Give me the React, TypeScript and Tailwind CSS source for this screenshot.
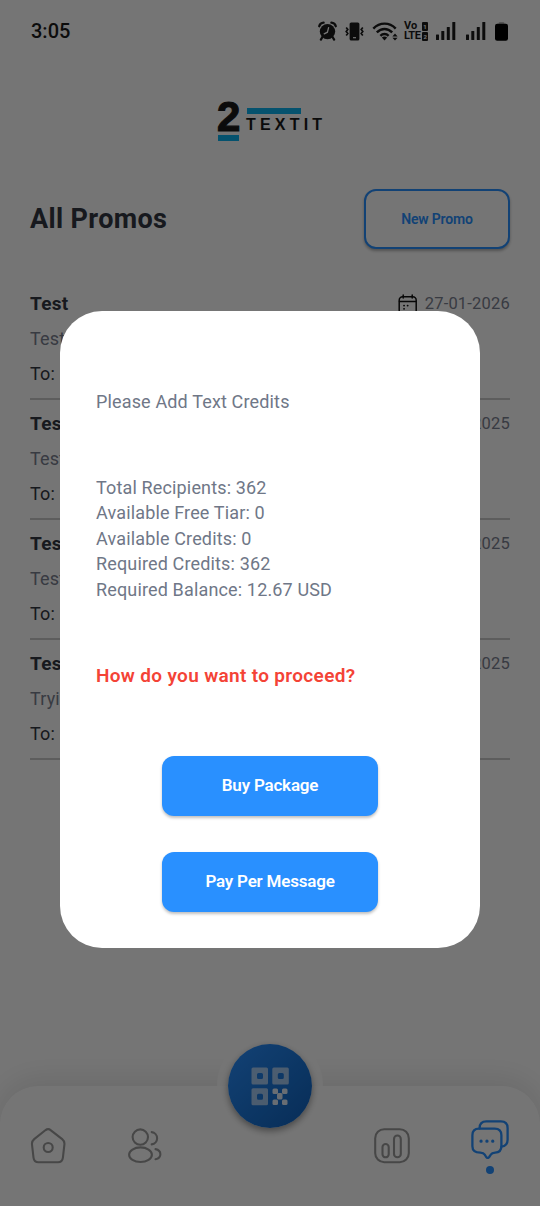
import type { ReactNode } from "react";

const promos = [
  { title: "Test", body: "Test", date: "27-01-2026" },
  { title: "Test", body: "Test", date: "18-12-2025" },
  { title: "Test", body: "Test", date: "18-12-2025" },
  { title: "Test", body: "Trying", date: "18-12-2025" },
];

const summary = [
  "Total Recipients: 362",
  "Available Free Tiar: 0",
  "Available Credits: 0",
  "Required Credits: 362",
  "Required Balance: 12.67 USD",
];

const qrCell =
  "M2 .5h13.500q1.500 0 1.500 1.500v14q0 1.500-1.500 1.500H2Q.5 17.500.5 16V2Q.5.5 2 .5zM6 7.500v3q0 1.500 1.500 1.500h3q1.500 0 1.500-1.500v-3Q12 6 10.500 6h-3Q6 6 6 7.500z";

function Signal() {
  return (
    <svg width="20" height="18" viewBox="0 0 20 18" fill="currentColor">
      <rect x="0" y="12.5" width="3" height="5.5" rx=".5" />
      <rect x="5.3" y="9" width="3" height="9" rx=".5" />
      <rect x="10.8" y="5" width="3" height="13" rx=".5" />
      <rect x="16.3" y="0" width="3" height="18" rx=".5" />
    </svg>
  );
}

function StatusBar() {
  return (
    <div className="flex h-[62px] items-center justify-between pr-8 pl-[31px] text-[#1c1c1c]">
      <span className="text-[20px] font-medium">3:05</span>
      <div className="flex items-center">
        <svg width="19" height="20" viewBox="0 0 19 20" fill="none">
          <path d="M1.2 5.2A5 5 0 0 1 5.6 1.6M17.8 5.2a5 5 0 0 0-4.4-3.6" stroke="currentColor" strokeWidth="2.3" strokeLinecap="round" />
          <circle cx="9.5" cy="10.6" r="7.7" fill="currentColor" />
          <path d="m4.4 16-1.5 2.6M14.6 16l1.5 2.6" stroke="currentColor" strokeWidth="2.2" strokeLinecap="round" />
          <path d="M10.6 6.6 9.4 11.2l-3.2 1.6" stroke="#fff" strokeWidth="1.3" strokeLinecap="round" />
        </svg>
        <svg className="ml-[8px]" width="19" height="19" viewBox="0 0 19 19" fill="none">
          <rect x="4.6" y=".5" width="9.8" height="18" rx="1.6" fill="currentColor" />
          <path d="M8 15.7h3" stroke="#fff" strokeWidth="1.2" />
          <path d="m1.2 5.5 1.6 2-1.6 2 1.6 2-1.6 2M17.8 5.5l-1.6 2 1.6 2-1.6 2 1.6 2" stroke="currentColor" strokeWidth="1.7" />
        </svg>
        <svg className="ml-[8px]" width="26" height="19" viewBox="0 0 26 19" fill="none">
          <path d="M1.300 6.600c6.400-6.700 16.200-6.700 22.400 0M4.800 10.400c4.600-4.600 10.800-4.600 15.400 0M8.400 13.800c2.400-2.400 5.800-2.400 8.200 0" stroke="currentColor" strokeWidth="2.4" />
          <path d="m12.5 18.6-2.7-3c1.600-1.400 3.800-1.400 5.400 0z" fill="currentColor" />
          <path d="m23 11.6 2.6 2.800h-5.200zM23 18.600l-2.600-2.800h5.200z" fill="currentColor" />
        </svg>
        <div className="ml-[6px] flex w-[24px] flex-col text-[11px] font-bold">
          <div className="flex h-[10px] items-center justify-between leading-[10px]">
            <span>Vo</span>
            <span className="h-[9px] w-[6px] rounded-[1px] bg-[#1c1c1c] text-center text-[6px] leading-[9px] text-white">1</span>
          </div>
          <div className="flex h-[10px] items-center justify-between leading-[10px] tracking-[-0.4px]">
            <span>LTE</span>
            <span className="h-[9px] w-[6px] rounded-[1px] bg-[#1c1c1c] text-center text-[6px] leading-[9px] text-white">2</span>
          </div>
        </div>
        <div className="ml-[8px]"><Signal /></div>
        <div className="ml-[10px]"><Signal /></div>
        <svg className="ml-[9px]" width="13" height="19" viewBox="0 0 13 19">
          <path d="M3.5 1.6Q3.5.5 4.6.5h3.800q1.100 0 1.100 1.100z" fill="#777" />
          <rect x="0" y="1.8" width="13" height="17" rx="2.2" fill="#000" />
        </svg>
      </div>
    </div>
  );
}

function Logo() {
  return (
    <div className="mt-[39px] ml-[217px] flex h-[40px] w-[110px]">
      <div className="w-[22px]">
        <div className="h-[34px] font-['Liberation_Sans'] text-[42px] leading-[32px] font-bold text-[#1a1a1a] [-webkit-text-stroke:1.2px_#1a1a1a]">2</div>
        <div className="ml-[1px] h-[6px] w-[21px] bg-[#0cb4f0]" />
      </div>
      <div className="ml-[7px] pt-[7px]">
        <div className="ml-[1px] h-[6px] w-[54px] bg-[#0cb4f0]" />
        <div className="mt-[2px] font-['Liberation_Sans'] text-[16px] leading-[18px] font-bold tracking-[4.2px] text-[#1a1a1a]">TEXTIT</div>
      </div>
    </div>
  );
}

function CalendarIcon() {
  return (
    <svg width="20" height="21" viewBox="0 0 20 21" fill="none" stroke="#111" strokeWidth="1.5" strokeLinecap="round">
      <rect x="1.2" y="2.8" width="17" height="17" rx="3.4" />
      <path d="M5.2 1v3M14.2 1v3M1.5 7.6h16.5" />
      <path d="M6 11.6h.1M9.6 11.6h.1M6 14.8h.1" strokeWidth="1.8" />
    </svg>
  );
}

function BottomNav() {
  return (
    <div className="relative mt-auto flex h-[120px] items-start rounded-t-[38px] bg-white text-[#9c9c9c] shadow-[0_-6px_30px_rgba(0,0,0,0.1)]">
      <svg className="mt-[42px] ml-[30px]" width="36" height="36" viewBox="0 0 36 36" fill="none" stroke="currentColor" strokeWidth="2.1">
        <path d="M15.3 2.300q2.800-2.200 5.600 0l11.300 8.800q2.600 2.200 2.200 5.400l-1.500 13.100q-.6 4.700-5 4.700H8.500q-4.400 0-5-4.700L2 16.500q-.4-3.200 2.200-5.400z" />
        <circle cx="18.2" cy="19.5" r="4.5" />
      </svg>
      <svg className="mt-[42px] ml-[62px]" width="36" height="36" viewBox="0 0 36 36" fill="none" stroke="currentColor" strokeWidth="2.1" strokeLinecap="round">
        <circle cx="12.3" cy="9.1" r="7.7" />
        <ellipse cx="12.5" cy="26.7" rx="11.4" ry="7.3" />
        <path d="M23.7 4.100a6.200 6.200 0 0 1 0 12.300M27.500 21.100c6.500 1.400 6.500 8.600 0 10.200" />
      </svg>
      <svg className="mt-[42px] ml-[210px]" width="36" height="36" viewBox="0 0 36 36" fill="none" stroke="currentColor" strokeWidth="2.1">
        <rect x="1.2" y="1.2" width="33.6" height="33" rx="9" />
        <rect x="8.5" y="16" width="6.2" height="13.3" rx="3.1" />
        <rect x="20" y="7.5" width="6.8" height="21.8" rx="3.4" />
      </svg>
      <div className="mt-[34px] ml-[61px] flex w-[38px] flex-col items-center">
        <svg width="38" height="39" viewBox="0 0 38 39" fill="none" stroke="#2990ff" strokeWidth="2.3" strokeLinejoin="round" strokeLinecap="round">
          <path d="M8.6 8.6v-.5q0-6.700 6.700-6.700h14.600q6.700 0 6.700 6.700v11.600q0 6.100-6.200 6.900" />
          <path d="M8 8.600h15.700q6.700 0 6.700 6.700v11q0 6.200-6.300 6.400-3.200.1-4.300 1.900l-1.600 2.400q-1.500 2-3 0l-1.500-2.400q-1.100-1.800-4.300-1.900-8-.1-8-6.400v-11q0-6.700 6.600-6.700z" />
          <path d="M10 21.200h.1M15.900 21.200h.1M21.700 21.200h.1" strokeWidth="3.2" />
        </svg>
        <div className="mt-[7px] h-[8px] w-[8px] rounded-full bg-[#2990ff]" />
      </div>
      {/* scan button straddles the top edge of the bar */}
      <div className="absolute top-[-53px] left-[217px] flex h-[106px] w-[106px] items-center justify-center rounded-full bg-white/80">
        <div className="flex h-[84px] w-[84px] items-center justify-center rounded-full bg-gradient-to-br from-[#2990ff] to-[#1062bd] shadow-[0_3px_7px_rgba(0,0,0,0.4)]">
          <svg width="38" height="39" viewBox="0 0 38 39" fill="#fff">
            <g fillOpacity=".6" fillRule="evenodd">
              <path d={qrCell} />
              <path d={qrCell} transform="translate(20.800 0)" />
              <path d={qrCell} transform="translate(0 20.800)" />
            </g>
            <g fillOpacity=".88">
              <rect x="21.500" y="21.500" width="5.500" height="5.500" rx="1.500" />
              <rect x="31" y="21.500" width="5.500" height="5.500" rx="1.500" />
              <rect x="26" y="26" width="5.500" height="6.500" rx="1.500" />
              <rect x="21.500" y="32.500" width="5.500" height="5.500" rx="1.500" />
              <rect x="31" y="32.500" width="5.500" height="5.500" rx="1.500" />
            </g>
          </svg>
        </div>
      </div>
    </div>
  );
}

function ModalButton({ children }: { children: ReactNode }) {
  return (
    <button className="h-[60px] w-[216px] rounded-[12px] bg-[#2990ff] text-[17px] font-semibold tracking-[-0.2px] text-white shadow-[0_2px_3px_rgba(0,0,0,0.25)]">
      {children}
    </button>
  );
}

export default function App() {
  return (
    <div className="relative h-[1206px] w-[540px] overflow-hidden bg-white font-['Roboto',sans-serif]">
      <div className="flex h-full flex-col">
        <StatusBar />
        <Logo />

        <div className="mt-[48px] flex items-center justify-between px-[30px]">
          <h1 className="text-[27px] font-bold tracking-[0.35px] text-[#323743]">All Promos</h1>
          <button className="h-[60px] w-[146px] rounded-[12px] border-2 border-[#2990ff] bg-white text-[14px] font-semibold tracking-[-0.15px] text-[#2990ff] shadow-[0_2px_3px_rgba(0,0,0,0.3)]">
            New Promo
          </button>
        </div>

        <div className="mt-[31px] px-[30px]">
          {promos.map((promo, i) => (
            <div key={i} className="h-[120px] border-b-2 border-[#cacaca] pt-[10px]">
              <div className="flex h-[28px] items-center justify-between">
                <span className="text-[19px] leading-[26px] font-bold tracking-[0.3px] text-[#323743]">{promo.title}</span>
                <span className="flex items-center gap-[7px] text-[16.5px] tracking-[0.2px] text-[#7b8190]">
                  <CalendarIcon />
                  {promo.date}
                </span>
              </div>
              <div className="mt-[8px] text-[18px] leading-[26px] tracking-[0.16px] text-[#7b8190]">{promo.body}</div>
              <div className="mt-[9px] text-[18px] leading-[26px] tracking-[0.16px] text-[#323743]">To:</div>
            </div>
          ))}
        </div>

        <BottomNav />
      </div>

      <div className="absolute inset-0 bg-black/54 px-[60px] pt-[311px]">
        <div className="flex h-[637px] flex-col rounded-[42px] bg-white px-[36px] text-[18px] tracking-[0.15px] text-[#6f7787]">
          <p className="mt-[78px] leading-[26px]">Please Add Text Credits</p>
          <div className="mt-[59.5px] leading-[25.5px]">
            {summary.map((line) => (
              <p key={line}>{line}</p>
            ))}
          </div>
          <p className="mt-[61px] text-[19px] leading-[26px] font-semibold tracking-[0.33px] text-[#f44336]">How do you want to proceed?</p>
          <div className="mt-[67px] flex flex-col items-center gap-[36px]">
            <ModalButton>Buy Package</ModalButton>
            <ModalButton>Pay Per Message</ModalButton>
          </div>
        </div>
      </div>
    </div>
  );
}
